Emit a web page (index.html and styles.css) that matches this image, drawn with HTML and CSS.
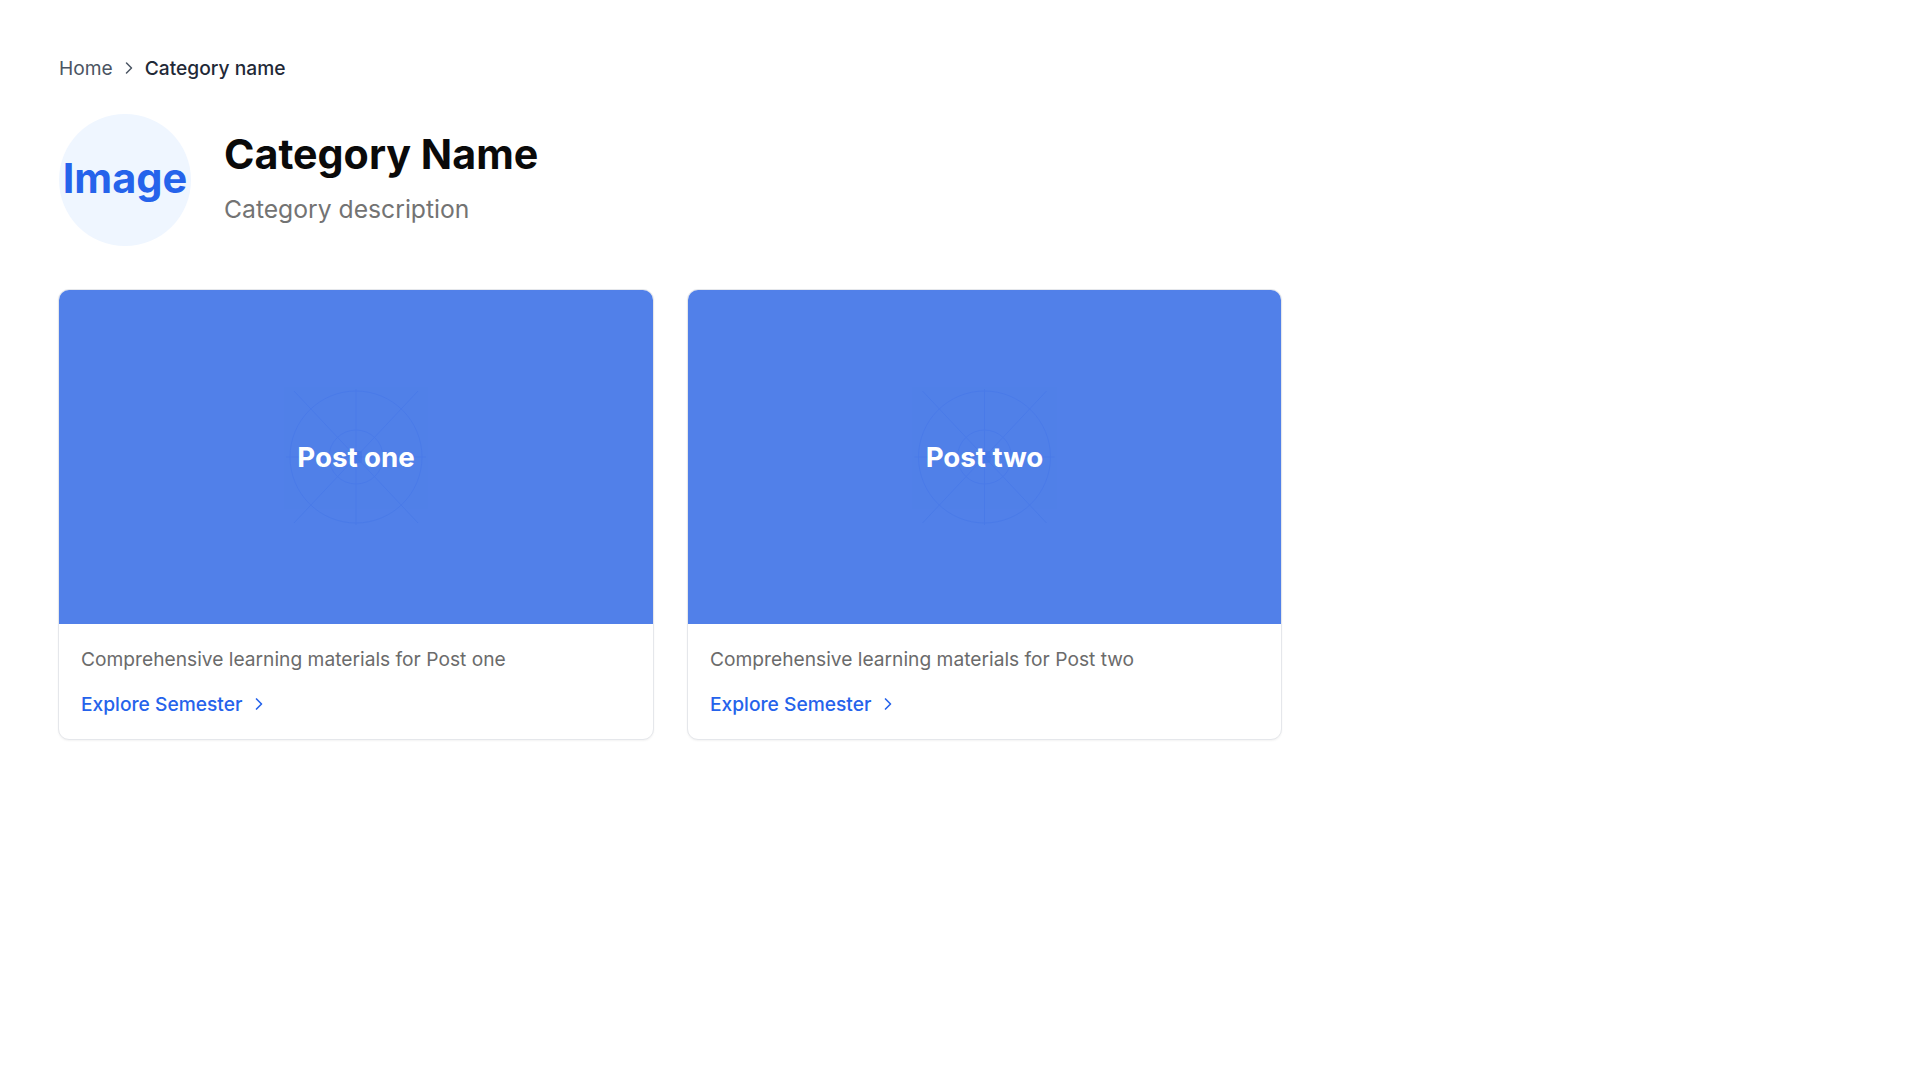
FILE: index.html
```html
<!DOCTYPE html>
<html lang="en">
<head>
<meta charset="utf-8">
<title>Category Name</title>
<link rel="stylesheet" href="styles.css">
</head>
<body>
<main class="page">
  <nav class="breadcrumb">
    <a class="crumb-link" href="#">Home</a>
    <svg class="crumb-sep" viewBox="0 0 24 24" fill="none" stroke="currentColor" stroke-width="1.8" stroke-linecap="round" stroke-linejoin="round"><path d="m9 18 6-6-6-6"/></svg>
    <span class="crumb-current">Category name</span>
  </nav>

  <header class="cat-header">
    <div class="cat-image"><span>Image</span></div>
    <div class="cat-text">
      <h1 class="cat-title">Category Name</h1>
      <p class="cat-desc">Category description</p>
    </div>
  </header>

  <section class="cards">
    <article class="card">
      <div class="card-cover">
        <svg class="cover-pattern" viewBox="-297 -167 594 334" preserveAspectRatio="xMidYMid slice">
          <g fill="none" stroke="#3a6fe6" stroke-width="1" opacity="0.3">
            <circle cx="0" cy="0" r="66"/>
            <circle cx="0" cy="0" r="27"/>
            <path d="M0 -68V68M-70 0H70M-62 -66L62 66M62 -66L-62 66"/>
          </g>
          <rect x="-6" y="-6" width="12" height="12" rx="2" fill="#3f72e4" opacity="0.45"/>
        </svg>
        <h2 class="cover-title">Post one</h2>
      </div>
      <div class="card-body">
        <p class="card-desc">Comprehensive learning materials for Post one</p>
        <a class="card-link" href="#">Explore Semester
          <svg class="link-icon" viewBox="0 0 24 24" fill="none" stroke="currentColor" stroke-width="2" stroke-linecap="round" stroke-linejoin="round"><path d="m9 18 6-6-6-6"/></svg>
        </a>
      </div>
    </article>

    <article class="card">
      <div class="card-cover">
        <svg class="cover-pattern" viewBox="-297 -167 594 334" preserveAspectRatio="xMidYMid slice">
          <g fill="none" stroke="#3a6fe6" stroke-width="1" opacity="0.3">
            <circle cx="0" cy="0" r="66"/>
            <circle cx="0" cy="0" r="27"/>
            <path d="M0 -68V68M-70 0H70M-62 -66L62 66M62 -66L-62 66"/>
          </g>
          <rect x="-6" y="-6" width="12" height="12" rx="2" fill="#3f72e4" opacity="0.45"/>
        </svg>
        <h2 class="cover-title">Post two</h2>
      </div>
      <div class="card-body">
        <p class="card-desc">Comprehensive learning materials for Post two</p>
        <a class="card-link" href="#">Explore Semester
          <svg class="link-icon" viewBox="0 0 24 24" fill="none" stroke="currentColor" stroke-width="2" stroke-linecap="round" stroke-linejoin="round"><path d="m9 18 6-6-6-6"/></svg>
        </a>
      </div>
    </article>
  </section>
</main>
</body>
</html>
```

FILE: styles.css
```css
* { box-sizing: border-box; }

html, body {
  margin: 0;
  padding: 0;
  background: #ffffff;
}

body {
  font-family: Inter, "Noto Sans", "Liberation Sans", sans-serif;
  color: #111827;
}

.page {
  padding: 56px 59px 40px 58px;
}

.breadcrumb {
  display: flex;
  align-items: center;
  gap: 6px;
  height: 24px;
  padding-left: 1px;
  font-size: 19.2px;
  line-height: 24px;
}

.crumb-link {
  color: #4b5563;
  text-decoration: none;
}

.crumb-sep {
  width: 20px;
  height: 20px;
  color: #4b5563;
}

.crumb-current {
  color: #1f2937;
  font-weight: 500;
}

.cat-header {
  display: flex;
  align-items: center;
  gap: 33px;
  margin-top: 34px;
  padding-left: 1px;
}

.cat-image {
  width: 132px;
  height: 132px;
  flex: none;
  border-radius: 50%;
  background: #eff6ff;
  display: flex;
  align-items: center;
  justify-content: center;
}

.cat-image span {
  color: #2563eb;
  font-weight: 700;
  font-size: 41.5px;
  line-height: 1;
  margin-top: -2px;
}

.cat-title {
  margin: 2px 0 0;
  font-size: 41.2px;
  line-height: 44px;
  font-weight: 700;
  color: #0a0a0a;
}

.cat-desc {
  margin: 11px 0 0;
  font-size: 24.7px;
  line-height: 44px;
  color: #737373;
}

.cards {
  display: grid;
  grid-template-columns: 596px 595px;
  gap: 33px;
  margin-top: 43px;
}

.card {
  border: 1px solid #e5e7eb;
  border-radius: 11px;
  overflow: hidden;
  background: #ffffff;
  box-shadow: 0 1px 2px rgba(0, 0, 0, 0.05);
}

.card-cover {
  position: relative;
  height: 334px;
  background: #5180e9;
  display: flex;
  align-items: center;
  justify-content: center;
}

.cover-pattern {
  position: absolute;
  inset: 0;
  width: 100%;
  height: 100%;
}

.cover-title {
  position: relative;
  margin: 0;
  color: #ffffff;
  font-size: 27.7px;
  font-weight: 700;
}

.card-body {
  padding: 21px 22px 21px;
  display: flex;
  flex-direction: column;
  gap: 17px;
}

.card-desc {
  margin: 0;
  font-size: 19.2px;
  line-height: 28px;
  color: #6b6b6b;
}

.card-link {
  display: flex;
  align-items: center;
  gap: 7px;
  color: #2563eb;
  font-weight: 500;
  font-size: 19.2px;
  line-height: 28px;
  text-decoration: none;
}

.link-icon {
  width: 20px;
  height: 20px;
}
```
